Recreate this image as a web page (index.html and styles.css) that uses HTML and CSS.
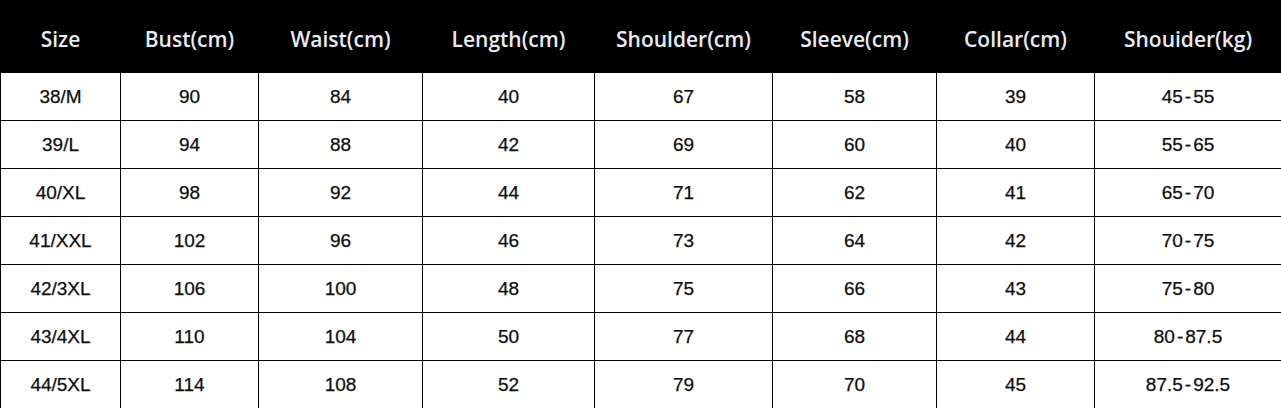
FILE: index.html
```html
<!DOCTYPE html>
<html>
<head>
<meta charset="utf-8">
<link rel="stylesheet" href="styles.css">
</head>
<body>
<table class="size-table">
  <colgroup>
    <col class="c1"><col class="c2"><col class="c3"><col class="c4"><col class="c5"><col class="c6"><col class="c7"><col class="c8">
  </colgroup>
  <thead>
    <tr>
      <th>Size</th><th>Bust(cm)</th><th>Waist(cm)</th><th>Length(cm)</th><th>Shoulder(cm)</th><th>Sleeve(cm)</th><th>Collar(cm)</th><th>Shouider(kg)</th>
    </tr>
  </thead>
  <tbody>
    <tr><td>38/M</td><td>90</td><td>84</td><td>40</td><td>67</td><td>58</td><td>39</td><td>45<span class="dash">-</span>55</td></tr>
    <tr><td>39/L</td><td>94</td><td>88</td><td>42</td><td>69</td><td>60</td><td>40</td><td>55<span class="dash">-</span>65</td></tr>
    <tr><td>40/XL</td><td>98</td><td>92</td><td>44</td><td>71</td><td>62</td><td>41</td><td>65<span class="dash">-</span>70</td></tr>
    <tr><td>41/XXL</td><td>102</td><td>96</td><td>46</td><td>73</td><td>64</td><td>42</td><td>70<span class="dash">-</span>75</td></tr>
    <tr><td>42/3XL</td><td>106</td><td>100</td><td>48</td><td>75</td><td>66</td><td>43</td><td>75<span class="dash">-</span>80</td></tr>
    <tr><td>43/4XL</td><td>110</td><td>104</td><td>50</td><td>77</td><td>68</td><td>44</td><td>80<span class="dash">-</span>87.5</td></tr>
    <tr><td>44/5XL</td><td>114</td><td>108</td><td>52</td><td>79</td><td>70</td><td>45</td><td>87.5<span class="dash">-</span>92.5</td></tr>
  </tbody>
</table>
</body>
</html>
```

FILE: styles.css
```css
html, body {
  margin: 0;
  padding: 0;
  background: #ffffff;
}
.size-table {
  width: 1281px;
  table-layout: fixed;
  border-collapse: collapse;
}
.c1 { width: 120px; }
.c2 { width: 138px; }
.c3 { width: 164px; }
.c4 { width: 172px; }
.c5 { width: 178px; }
.c6 { width: 164px; }
.c7 { width: 158px; }
.c8 { width: 187px; }
.size-table th {
  background: #000000;
  color: #e8ecee;
  font-family: "Open Sans", "Noto Sans", sans-serif;
  font-weight: 600;
  font-size: 21px;
  height: 72px;
  padding: 4px 0 0 0;
  text-align: center;
  border: 1px solid #000;
  box-sizing: border-box;
}
.size-table td {
  height: 48px;
  padding: 1px 0 0 0;
  font-family: "Liberation Sans", Arial, sans-serif;
  font-size: 19px;
  color: #0d0d0d;
  -webkit-text-stroke: 0.25px #0d0d0d;
  text-align: center;
  border: 1px solid #000;
  box-sizing: border-box;
}
.size-table tbody tr:last-child td {
  border-bottom-width: 2px;
}
.dash {
  margin: 0 2px;
}
```
